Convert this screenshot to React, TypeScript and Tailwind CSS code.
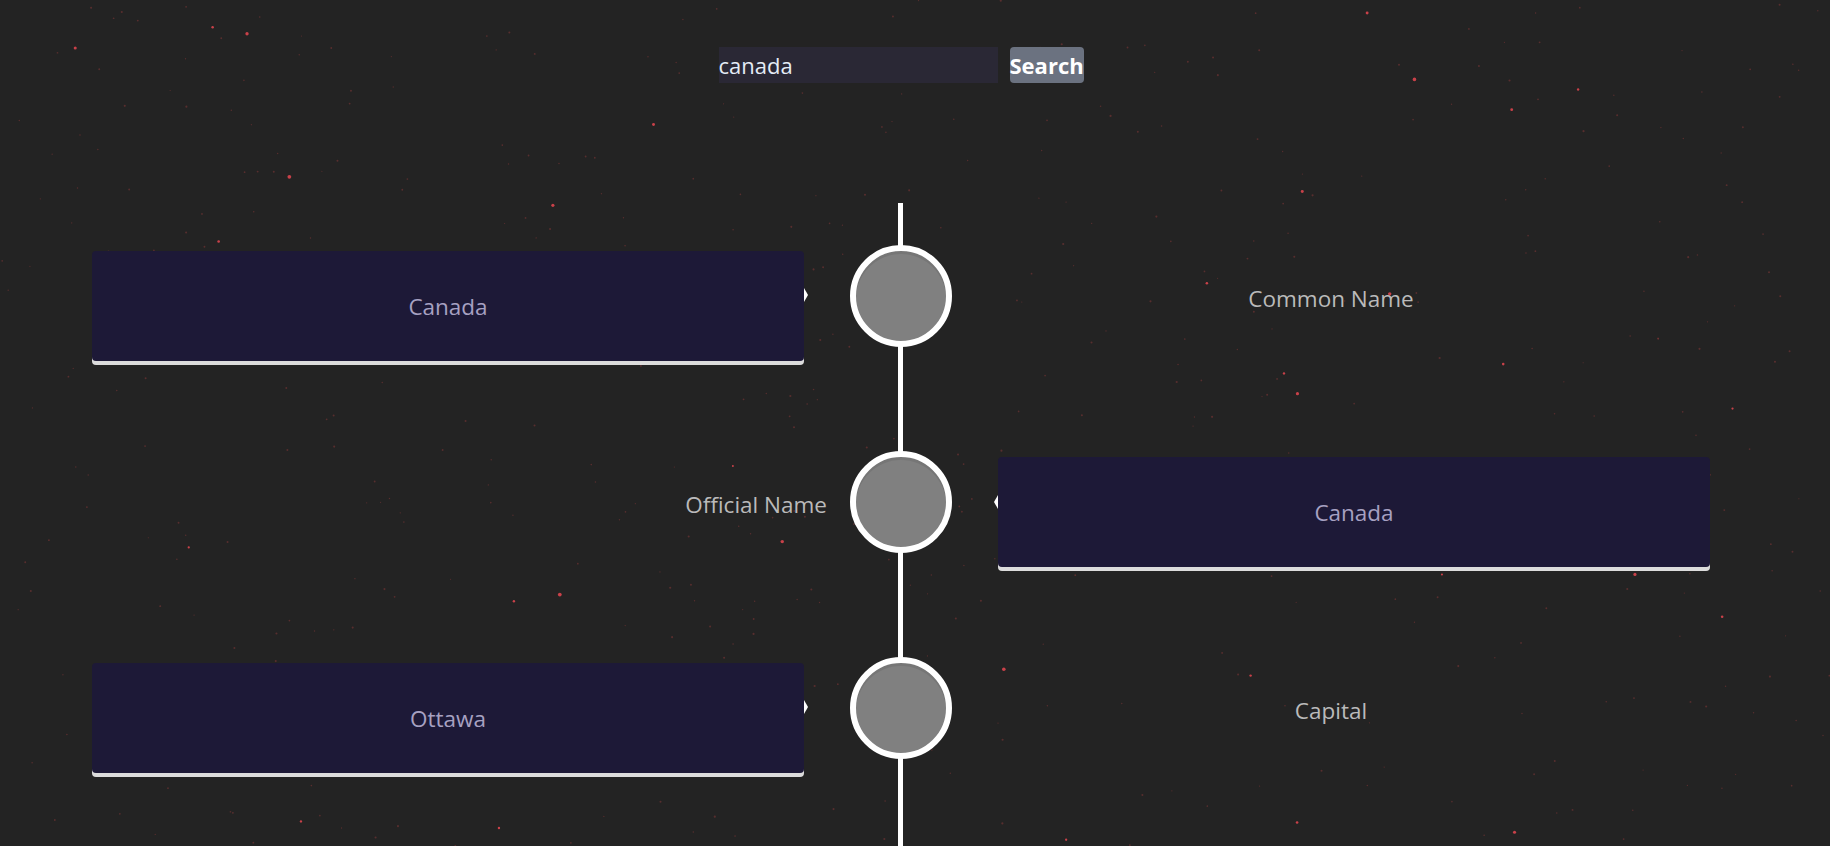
import React from 'react';

type Row = {
  value: string;
  label: string;
  side: 'left' | 'right';
};

const rows: Row[] = [
  { value: 'Canada', label: 'Common Name', side: 'left' },
  { value: 'Canada', label: 'Official Name', side: 'right' },
  { value: 'Ottawa', label: 'Capital', side: 'left' },
];

// deterministic star field
function makeStars() {
  let s = 1337;
  const rand = () => {
    s |= 0;
    s = (s + 0x6d2b79f5) | 0;
    let t = Math.imul(s ^ (s >>> 15), 1 | s);
    t = (t + Math.imul(t ^ (t >>> 7), 61 | t)) ^ t;
    return ((t ^ (t >>> 14)) >>> 0) / 4294967296;
  };
  const stars: { x: number; y: number; r: number; c: string }[] = [];
  for (let i = 0; i < 520; i++) {
    stars.push({ x: rand() * 1830, y: rand() * 846, r: 0.6 + rand() * 0.5, c: 'rgba(150,60,60,0.45)' });
  }
  for (let i = 0; i < 40; i++) {
    stars.push({ x: rand() * 1830, y: rand() * 846, r: 1 + rand() * 0.9, c: 'rgba(230,70,80,0.85)' });
  }
  return stars;
}

const stars = makeStars();

function Card({ value, arrow }: { value: string; arrow: 'left' | 'right' }) {
  return (
    <div className="relative mt-[6px] h-[110px] w-[712px] rounded-[4px] bg-[#1d1937] shadow-[0_4px_0_#dcdcdc] flex items-center justify-center">
      <span className="text-[22.5px] text-[#a7a1c2] pt-[2px]">{value}</span>
      {arrow === 'right' ? (
        <div className="absolute top-[37px] right-[-4px] h-0 w-0 border-y-[7px] border-y-transparent border-l-[4px] border-l-white" />
      ) : (
        <div className="absolute top-[38px] left-[-4px] h-0 w-0 border-y-[7px] border-y-transparent border-r-[4px] border-r-white" />
      )}
    </div>
  );
}

function Label({ text, align }: { text: string; align: 'center' | 'right' }) {
  return (
    <div
      className={
        align === 'center'
          ? 'h-[102px] flex items-center justify-center pr-[46px] pt-[5px]'
          : 'h-[102px] flex items-center justify-end -mr-[23px] pt-[5px]'
      }
    >
      <span className="text-[22.5px] text-[#bababa] whitespace-nowrap">{text}</span>
    </div>
  );
}

function TimelineRow({ row }: { row: Row }) {
  return (
    <div className="flex items-start h-[206px]">
      <div className="w-[712px]">
        {row.side === 'left' ? <Card value={row.value} arrow="right" /> : <Label text={row.label} align="right" />}
      </div>
      <div className="w-[194px] flex justify-center">
        <div className="relative z-10 h-[102px] w-[102px] rounded-full border-[6px] border-white bg-[#808080] shadow-[inset_0_3px_0_rgba(0,0,0,0.08)]" />
      </div>
      <div className="w-[712px]">
        {row.side === 'left' ? <Label text={row.label} align="center" /> : <Card value={row.value} arrow="left" />}
      </div>
    </div>
  );
}

export default function App() {
  return (
    <div className="relative min-h-screen overflow-hidden bg-[#232323] font-['Open_Sans',sans-serif]">
      <svg className="absolute inset-0 h-full w-full" width="1830" height="846">
        {stars.map((st, i) => (
          <circle key={i} cx={st.x} cy={st.y} r={st.r} fill={st.c} />
        ))}
      </svg>

      <div className="relative ml-[92px] w-[1618px] pt-[47px]">
        <form className="flex justify-center gap-[12px] h-[36px]" onSubmit={(e) => e.preventDefault()}>
          <input
            defaultValue="canada"
            className="w-[279px] h-[36px] bg-[#2a2835] text-[22px] text-[#e4ecf6] outline-none px-0"
          />
          <button className="w-[74px] h-[36px] rounded-[4px] bg-[#6b7280] text-[22px] font-bold text-white leading-none">
            Search
          </button>
        </form>

        <div className="relative mt-[120px] pt-[42px] pb-[60px]">
          <div className="absolute top-0 bottom-0 left-[806px] w-[5px] bg-white" />
          {rows.map((r, i) => (
            <TimelineRow key={i} row={r} />
          ))}
        </div>
      </div>
    </div>
  );
}
